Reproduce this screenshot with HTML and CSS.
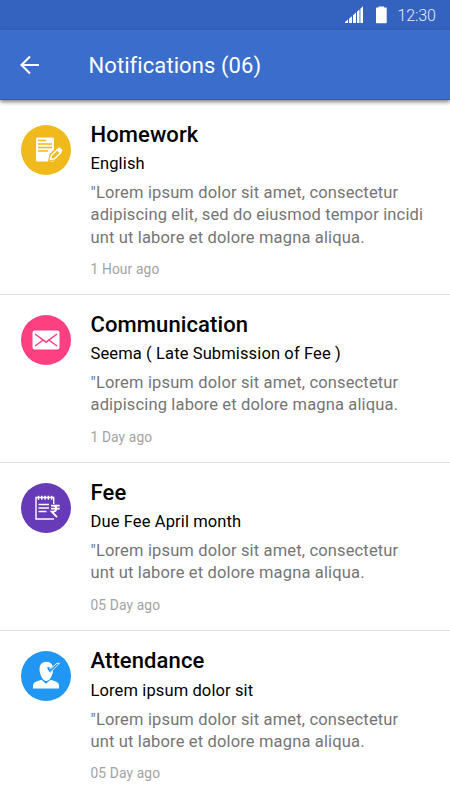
FILE: index.html
```html
<!DOCTYPE html>
<html lang="en">
<head>
<meta charset="utf-8">
<meta name="viewport" content="width=device-width, initial-scale=1">
<title>Notifications</title>
<link rel="stylesheet" href="styles.css">
</head>
<body>
<div class="status-bar">
  <svg class="signal" width="19" height="17" viewBox="0 0 19 17"><path d="M0 17v-1l3-2.500v3.500zM4 17v-4.200l3-2.600v6.800zM8 17V9.200l3-2.600V17zM12 17V5.700l2.500-2.200V17zM15.400 17V2.700L18 .300V17z" fill="#fff"/></svg>
  <svg class="battery" width="11" height="18" viewBox="0 0 11 18"><path d="M2.500 1.500V.500h5.500v1h2.200q.5 0 .5.500v14.500q0 .700-.700.700H.700q-.700 0-.700-.700V2.200q0-.700.700-.700z" fill="#fff"/></svg>
  <span class="clock">12:30</span>
</div>
<header class="app-bar">
  <svg class="back" width="20" height="20" viewBox="0 0 20 20"><path d="M19 10H2M10 1.500 1.500 10l8.500 8.500" fill="none" stroke="#fff" stroke-width="2.100"/></svg>
  <h1 class="heading">Notifications (06)</h1>
</header>
<main class="list">
  <article class="item item-long">
    <svg class="avatar" viewBox="0 0 50 50"><circle cx="25" cy="25" r="25" fill="#f0ba1d"/>
      <path d="M16.500 12.500h15q1.500 0 1.500 1.500v21q0 1.500-1.500 1.500h-15Q15 36.500 15 35V14q0-1.500 1.500-1.500z" fill="#fff"/>
      <path d="M17 15.500h8M17 19h14M17 22.500h14M17 26h10" stroke="#f0ba1d" stroke-width="1.400"/>
      <path d="m29.500 34.500.8-4.500 8-7.500 3 3-7.800 7.800z" fill="#f0ba1d" stroke="#f0ba1d" stroke-width="4"/>
      <path d="m29.500 34.500.8-4 6.200-6 3.200 3.200-6.200 6z" fill="#f0ba1d" stroke="#fff" stroke-width="1.600" stroke-linejoin="round"/><path d="m35.500 24.800 2.300-2.300q.5-.5 1 0l2.500 2.500q.5.5 0 1L39 28.300z" fill="#fff"/></svg>
    <div class="body">
      <h2 class="title">Homework</h2>
      <p class="subject">English</p>
      <p class="text">"Lorem ipsum dolor sit amet, consectetur<br>adipiscing elit, sed do eiusmod tempor incidi<br>unt ut labore et dolore magna aliqua.</p>
      <p class="time">1 Hour ago</p>
    </div>
  </article>
  <article class="item">
    <svg class="avatar" viewBox="0 0 50 50"><circle cx="25" cy="25" r="25" fill="#ff4080"/>
      <rect x="11.500" y="15.500" width="27" height="19" rx="2" fill="#fff"/>
      <path d="m14 19 11 8.200L36 19M14 31l7.500-5.500M36 31l-7.500-5.500" fill="none" stroke="#ff4080" stroke-width="1.500"/></svg>
    <div class="body">
      <h2 class="title">Communication</h2>
      <p class="subject">Seema ( Late Submission of Fee )</p>
      <p class="text">"Lorem ipsum dolor sit amet, consectetur<br>adipiscing labore et dolore magna aliqua.</p>
      <p class="time">1 Day ago</p>
    </div>
  </article>
  <article class="item">
    <svg class="avatar" viewBox="0 0 50 50"><circle cx="25" cy="25" r="25" fill="#673ab7"/>
      <path d="M32.700 21v-6.500H15v21.500h14" fill="none" stroke="#fff" stroke-width="1.400"/>
      <path d="M29 36h4" stroke="#fff" stroke-width="1.400"/>
      <path d="M17.500 12.800v4M20.800 12.800v4M24.100 12.800v4M27.400 12.800v4M30.700 12.800v4" stroke="#fff" stroke-width="1.400"/>
      <path d="M17.500 21.500h10.500M17.500 25h10.500M17.500 28.500h8" stroke="#fff" stroke-width="1.400"/>
      <path d="M30 22.700h8.700M30 25.600h8.700M30 22.700h2q3.300 0 3.300 3 0 3-4.600 3l5.300 5.500" fill="none" stroke="#fff" stroke-width="1.800"/></svg>
    <div class="body">
      <h2 class="title">Fee</h2>
      <p class="subject">Due Fee April month</p>
      <p class="text">"Lorem ipsum dolor sit amet, consectetur<br>unt ut labore et dolore magna aliqua.</p>
      <p class="time">05 Day ago</p>
    </div>
  </article>
  <article class="item">
    <svg class="avatar" viewBox="0 0 50 50"><circle cx="25" cy="25" r="25" fill="#2196f3"/>
      <path d="M12 37.500V35q0-3.500 4-4.700l4.500-1.600 4.500 4 4.500-4 4.500 1.600Q38 31.500 38 35v2.500z" fill="#fff"/>
      <path d="M25.300 10.700c4.200 0 6.900 3 6.900 7.300 0 5.500-3.400 12-6.900 12s-6.800-6.500-6.800-12c0-4.300 2.600-7.300 6.800-7.300z" fill="#fff"/>
      <path d="m27.500 17 2 2.500 7.500-6.500" fill="none" stroke="#2196f3" stroke-width="3"/>
      <path d="m27.300 16.500 2.200 1.300 6.300-5.500h2.700l-8.700 8.500z" fill="#2196f3" stroke="#fff" stroke-width=".9" stroke-linejoin="round"/>
      <path d="m26.700 16.200 2.800 4.300" stroke="#2196f3" stroke-width="1.500"/></svg>
    <div class="body">
      <h2 class="title">Attendance</h2>
      <p class="subject">Lorem ipsum dolor sit</p>
      <p class="text">"Lorem ipsum dolor sit amet, consectetur<br>unt ut labore et dolore magna aliqua.</p>
      <p class="time">05 Day ago</p>
    </div>
  </article>
</main>
</body>
</html>
```
FILE: styles.css
```css
* { box-sizing: border-box; }
body {
  margin: 0;
  height: 800px;
  overflow: hidden;
  background: #fff;
  font-family: Roboto, "Liberation Sans", sans-serif;
  color: #000;
}
h1, h2, p { margin: 0; font-weight: 400; white-space: nowrap; }
svg { display: block; flex: none; }
.status-bar {
  display: flex;
  align-items: flex-start;
  height: 30px;
  padding: 6px 14px 0 345px;
  background: #3363be;
}
.battery { margin-left: 12px; }
.clock {
  margin-left: 10.500px;
  font-size: 16px;
  font-weight: 300;
  line-height: 19px;
  letter-spacing: -.1px;
  color: #e4ebf8;
}
.app-bar {
  display: flex;
  align-items: center;
  height: 70px;
  padding: 0 20px;
  background: #3b6dcc;
  border-bottom: 1px solid #1f5fc0;
  box-shadow: 0 2px 4px rgba(0, 0, 0, .5);
}
.heading {
  margin-left: 48.500px;
  padding-top: 2px;
  font-size: 22px;
  line-height: 28px;
  letter-spacing: .08px;
  color: #fff;
}
.list { padding-top: 5px; }
.item {
  display: flex;
  height: 168px;
  padding: 20px 0 0 21px;
  border-bottom: 1px solid #e0e0e0;
}
.item-long { height: 190px; }
.item:last-child { border: 0; }
.avatar { width: 50px; height: 50px; }
.body { margin-left: 19.500px; }
.title {
  font-size: 22px;
  font-weight: 500;
  line-height: 20px;
  letter-spacing: .1px;
}
.subject {
  margin-top: 8px;
  font-size: 16.500px;
  line-height: 22px;
  letter-spacing: .12px;
}
.text {
  margin-top: 7px;
  font-size: 16.500px;
  line-height: 22.300px;
  letter-spacing: .15px;
  color: #757575;
}
.time {
  margin-top: 10px;
  font-size: 13.800px;
  line-height: 20px;
  letter-spacing: .12px;
  color: #a2a2a2;
}
.item:last-child .subject { margin-top: 9px; }
.item:last-child .time { margin-top: 9px; }
```
